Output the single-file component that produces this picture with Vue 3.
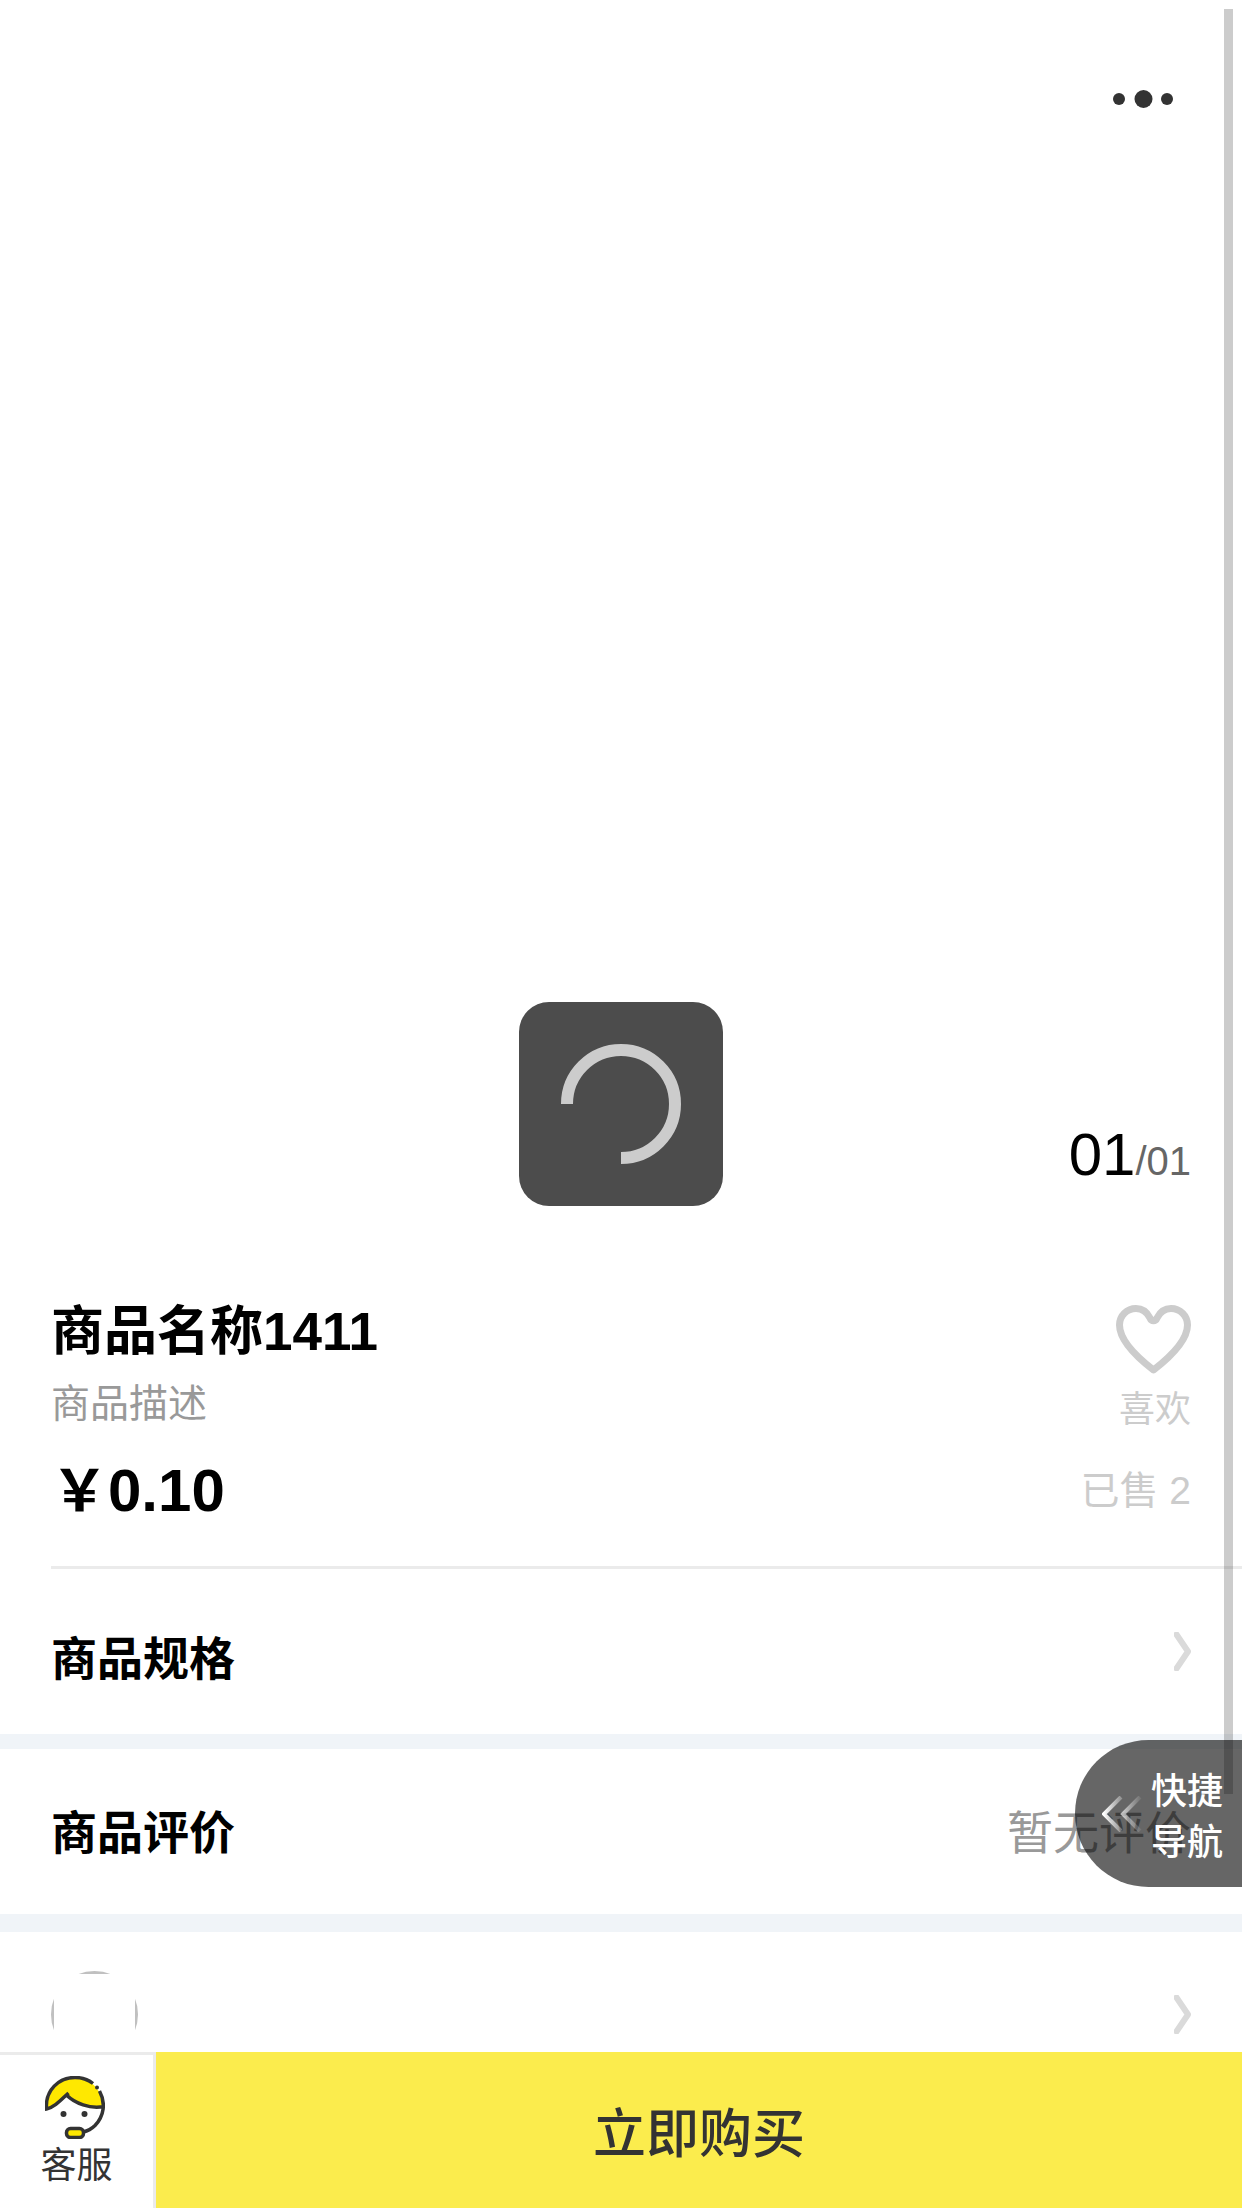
<script setup>
import { ref } from 'vue'

const product = {
  name: '商品名称1411',
  desc: '商品描述',
  price: '0.10',
  sold: 2,
}
const current = ref('01')
const total = ref('01')
const liked = ref(false)
</script>

<template>
  <div class="page">
    <main class="scroll">
      <section class="gallery">
        <button class="more" aria-label="更多">
          <svg width="60" height="18" viewBox="0 0 60 18">
            <circle cx="6" cy="9" r="6" />
            <circle cx="30.500" cy="9" r="9" />
            <circle cx="54" cy="9" r="6" />
          </svg>
        </button>
        <p class="counter"><span class="now">{{ current }}</span><span class="total">/{{ total }}</span></p>
      </section>

      <section class="info">
        <div class="info-row">
          <div class="names">
            <h1>{{ product.name }}</h1>
            <p class="desc">{{ product.desc }}</p>
          </div>
          <button class="like" :aria-pressed="liked" @click="liked = !liked">
            <svg width="75" height="69" viewBox="0 0 75 69">
              <path
                d="M37.500 65 C22 53 3.500 36 3.500 20 C3.500 10.500 11 3.500 20 3.500 C27 3.500 31 7 34 13 C35.500 16.500 39.500 16.500 41 13 C44 7 48 3.500 55 3.500 C64 3.500 71.500 10.500 71.500 20 C71.500 36 53 53 37.500 65 Z"
                fill="none" stroke="#ccc" stroke-width="7" stroke-linejoin="round" />
            </svg>
            <span>喜欢</span>
          </button>
        </div>
        <div class="info-row price-row">
          <p class="price"><span class="yen">&#xFFE5;</span>{{ product.price }}</p>
          <p class="sold">已售 {{ product.sold }}</p>
        </div>
      </section>

      <a class="cell spec" href="#spec">
        <span class="label">商品规格</span>
        <svg class="chevron" width="17" height="39" viewBox="0 0 17 39">
          <path d="M2.500 2.500 L14 19.500 L2.500 36.500" />
        </svg>
      </a>

      <section class="cell review">
        <span class="label">商品评价</span>
        <span class="hint">暂无评价</span>
      </section>

      <a class="cell shop" href="#shop">
        <span class="avatar"><span class="avatar-frame"></span></span>
        <svg class="chevron" width="17" height="39" viewBox="0 0 17 39">
          <path d="M2.500 2.500 L14 19.500 L2.500 36.500" />
        </svg>
      </a>
    </main>

    <footer class="bar">
      <button class="service">
        <svg width="60" height="63" viewBox="0 0 60 63">
          <path d="M1.500 33 C0 14 14 1.500 30 1.500 C45 1.500 57 13 58.500 30.500 C45 33 30 27.500 21.500 19 C15 25 9 31.500 1.500 33 Z" fill="#ffe800" />
          <path
            d="M48 7.500 C43 3.500 37 1.500 30 1.500 C14 1.500 0 14 1.500 33 C9 31.500 15 25 23.500 17 M21.500 19 C30 27.500 45 33 58.500 30.500 M54.500 15 C61 27 59 40 50 49.500 C46.500 53 42.500 55 38 56"
            fill="none" stroke="#333" stroke-width="3.500" />
          <circle cx="52" cy="11.500" r="2" fill="#333" />
          <circle cx="18.500" cy="38" r="3" fill="#333" />
          <circle cx="39.500" cy="38" r="3" fill="#333" />
          <rect x="21.500" y="52.500" width="17" height="9" rx="4" fill="#ffe800" stroke="#333" stroke-width="3.500" />
        </svg>
        <span>客服</span>
      </button>
      <button class="buy">立即购买</button>
    </footer>

    <div class="thumb"></div>

    <button class="quick-nav">
      <svg width="40" height="36" viewBox="0 0 40 36">
        <defs>
          <linearGradient id="near" x1="0" x2="1">
            <stop offset="0" stop-color="#fff" />
            <stop offset="1" stop-color="#fff" stop-opacity=".3" />
          </linearGradient>
          <linearGradient id="far" x1="0" x2="1">
            <stop offset="0" stop-color="#fff" stop-opacity=".65" />
            <stop offset="1" stop-color="#fff" stop-opacity=".1" />
          </linearGradient>
        </defs>
        <path d="M19 1 L2 18 L19 35" fill="none" stroke="url(#near)" stroke-width="4" />
        <path d="M38 1 L21 18 L38 35" fill="none" stroke="url(#far)" stroke-width="4" />
      </svg>
      <span>快捷<br>导航</span>
    </button>

    <div class="loading" role="status" aria-label="加载中">
      <svg width="120" height="120" viewBox="0 0 120 120">
        <path d="M6 60 A54 54 0 1 1 60 114" fill="none" stroke="#ccc" stroke-width="12" />
      </svg>
    </div>
  </div>
</template>

<style>
html,
body,
#app {
  height: 100%;
}
</style>

<style scoped>
.page {
  position: relative;
  display: flex;
  flex-direction: column;
  height: 100%;
  overflow: hidden;
  background: #fff;
  color: #000;
  font-family: "Liberation Sans", "Noto Sans CJK SC", sans-serif;
}

h1,
p {
  margin: 0;
}

button {
  margin: 0;
  padding: 0;
  border: 0;
  background: none;
  color: inherit;
  font: inherit;
}

a {
  color: inherit;
  text-decoration: none;
}

svg {
  display: block;
}

.scroll {
  flex: 1;
  min-height: 0;
  overflow-y: auto;
  scrollbar-width: none;
}

.gallery {
  display: flex;
  flex-direction: column;
  justify-content: space-between;
  align-items: flex-end;
  box-sizing: border-box;
  aspect-ratio: 1;
  padding: 90px 51px 36px;
}

.more {
  margin-right: 18px;
  fill: #333;
}

.counter {
  line-height: 72px;
}

.now {
  font-size: 60px;
}

.total {
  color: #666;
  font-size: 40px;
}

.info {
  margin-left: 51px;
  padding: 57px 51px 33px 0;
  border-bottom: 3px solid #ebebeb;
}

.info-row {
  display: flex;
  justify-content: space-between;
  align-items: flex-start;
}

h1 {
  font-size: 53px;
  font-weight: 700;
  line-height: 66px;
}

.desc {
  margin-top: 9px;
  color: #999;
  font-size: 39px;
  line-height: 60px;
}

.like {
  display: flex;
  flex-direction: column;
  align-items: flex-end;
  gap: 9px;
  margin-top: 6px;
  color: #ccc;
  font-size: 36px;
  line-height: 54px;
}

.price-row {
  align-items: center;
  margin-top: 12px;
}

.price {
  font-size: 60px;
  font-weight: 700;
  line-height: 84px;
}

.yen {
  font-size: 57px;
  line-height: 60px;
}

.sold {
  color: #ccc;
  font-size: 39px;
  line-height: 60px;
}

.cell {
  display: flex;
  justify-content: space-between;
  align-items: center;
  box-sizing: border-box;
  height: 165px;
  padding: 0 51px;
  font-size: 46px;
}

.spec {
  border-bottom: 15px solid #f0f4f8;
  height: 180px;
}

.spec .label {
  padding-top: 6px;
}

.review {
  border-bottom: 18px solid #f0f4f8;
  height: 183px;
  padding-bottom: 6px;
}

.label {
  font-weight: 700;
}

.hint {
  color: #999;
}

.chevron path {
  fill: none;
  stroke: #dadada;
  stroke-width: 6;
  stroke-linecap: round;
  stroke-linejoin: round;
}

.avatar {
  width: 87px;
  height: 87px;
  border-radius: 50%;
  overflow: hidden;
}

.avatar-frame {
  display: block;
  box-sizing: border-box;
  height: 100%;
  border: 3px solid #c0c0c0;
}

.bar {
  display: flex;
  height: 156px;
  color: #333;
}

.service {
  display: flex;
  flex-direction: column;
  align-items: center;
  box-sizing: border-box;
  width: 156px;
  padding-top: 21px;
  border-top: 3px solid #ebebeb;
  border-right: 3px solid #ebebeb;
  font-size: 36px;
  line-height: 54px;
}

.service svg {
  margin-right: 3px;
}

.buy {
  flex: 1;
  background: #fbec4d;
  font-size: 53px;
  font-weight: 500;
}

.thumb {
  position: absolute;
  top: 9px;
  right: 9px;
  width: 9px;
  height: 1785px;
  background: rgba(0, 0, 0, 0.2);
}

.quick-nav {
  position: absolute;
  right: 0;
  bottom: 321px;
  display: flex;
  align-items: center;
  gap: 9px;
  box-sizing: border-box;
  width: 167px;
  height: 147px;
  padding-left: 27px;
  border-radius: 74px 0 0 74px;
  background: rgba(0, 0, 0, 0.6);
  color: #fff;
  font-size: 36px;
  font-weight: 500;
  line-height: 51px;
}

.quick-nav span {
  padding-top: 6px;
}

.loading {
  position: absolute;
  top: 50%;
  left: 50%;
  display: flex;
  justify-content: center;
  align-items: center;
  width: 204px;
  height: 204px;
  border-radius: 30px;
  background: rgba(0, 0, 0, 0.7);
  transform: translate(-50%, -50%);
}
</style>
